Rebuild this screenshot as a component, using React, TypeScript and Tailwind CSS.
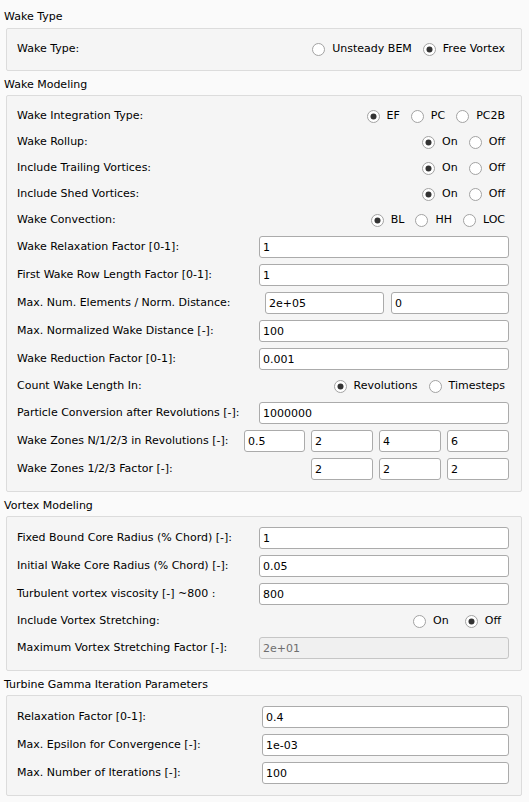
import React from "react"

const font = { fontFamily: '"DejaVu Sans", Verdana, sans-serif' }

function Radio({ label, checked }: { label: string; checked?: boolean }) {
  return (
    <div className="flex items-center">
      <svg width="13" height="13" viewBox="0 0 13 13" className="shrink-0">
        <circle cx="6.5" cy="6.5" r="6" fill="#ffffff" stroke="#a2a2a2" strokeWidth="1" />
        {checked && <circle cx="6.5" cy="6.5" r="3" fill="#333333" />}
      </svg>
      <span className="ml-[7px]">{label}</span>
    </div>
  )
}

function RadioRow({
  label,
  options,
  selected,
  gap = "gap-[11px]",
  pr = "pr-[4px]",
}: {
  label: string
  options: string[]
  selected: number
  gap?: string
  pr?: string
}) {
  return (
    <div className="flex h-[20px] items-center justify-between">
      <span>{label}</span>
      <div className={`flex items-center ${gap} ${pr}`}>
        {options.map((o, i) => (
          <Radio key={o} label={o} checked={i === selected} />
        ))}
      </div>
    </div>
  )
}

function Field({ value, width, disabled }: { value: string; width: string; disabled?: boolean }) {
  return (
    <input
      readOnly
      value={value}
      disabled={disabled}
      style={font}
      className={`h-[22px] ${width} rounded-[3px] border px-[3px] text-[11px] outline-none ${
        disabled
          ? "border-[#c6c6c6] bg-[#f0f0f0] text-[#6e6e6e]"
          : "border-[#ababab] bg-white text-black"
      }`}
    />
  )
}

function InputRow({
  label,
  value,
  width = "w-[250px]",
  disabled,
}: {
  label: string
  value: string
  width?: string
  disabled?: boolean
}) {
  return (
    <div className="flex h-[22px] items-center justify-between">
      <span>{label}</span>
      <Field value={value} width={width} disabled={disabled} />
    </div>
  )
}

function Section({
  title,
  first,
  children,
}: {
  title: string
  first?: boolean
  children: React.ReactNode
}) {
  return (
    <div>
      <div className={`pl-[4px] leading-[14px] ${first ? "h-[28px] pt-[10px]" : "h-[24px] pt-[7px]"}`}>
        {title}
      </div>
      <div className="ml-[6px] flex w-[516px] flex-col gap-[6px] rounded-[2px] border border-[#dcdcdc] bg-[#f5f5f5] pb-[11px] pl-[10px] pr-[12px] pt-[10px]">
        {children}
      </div>
    </div>
  )
}

export default function App() {
  return (
    <div style={font} className="h-[802px] w-[529px] bg-[#fafafa] text-[11px] text-black">
      <Section title="Wake Type" first>
        <RadioRow label="Wake Type:" options={["Unsteady BEM", "Free Vortex"]} selected={1} />
      </Section>

      <Section title="Wake Modeling">
        <RadioRow label="Wake Integration Type:" options={["EF", "PC", "PC2B"]} selected={0} />
        <RadioRow label="Wake Rollup:" options={["On", "Off"]} selected={0} />
        <RadioRow label="Include Trailing Vortices:" options={["On", "Off"]} selected={0} />
        <RadioRow label="Include Shed Vortices:" options={["On", "Off"]} selected={0} />
        <RadioRow label="Wake Convection:" options={["BL", "HH", "LOC"]} selected={0} />
        <InputRow label="Wake Relaxation Factor [0-1]:" value="1" />
        <InputRow label="First Wake Row Length Factor [0-1]:" value="1" />
        <div className="flex h-[22px] items-center justify-between">
          <span>Max. Num. Elements / Norm. Distance:</span>
          <div className="flex gap-[7px]">
            <Field value="2e+05" width="w-[119px]" />
            <Field value="0" width="w-[118px]" />
          </div>
        </div>
        <InputRow label="Max. Normalized Wake Distance [-]:" value="100" />
        <InputRow label="Wake Reduction Factor [0-1]:" value="0.001" />
        <RadioRow label="Count Wake Length In:" options={["Revolutions", "Timesteps"]} selected={0} />
        <InputRow label="Particle Conversion after Revolutions [-]:" value="1000000" />
        <div className="flex h-[22px] items-center justify-between">
          <span>Wake Zones N/1/2/3 in Revolutions [-]:</span>
          <div className="flex gap-[6px]">
            <Field value="0.5" width="w-[61px]" />
            <Field value="2" width="w-[62px]" />
            <Field value="4" width="w-[62px]" />
            <Field value="6" width="w-[62px]" />
          </div>
        </div>
        <div className="flex h-[22px] items-center justify-between">
          <span>Wake Zones 1/2/3 Factor [-]:</span>
          <div className="flex gap-[6px]">
            <Field value="2" width="w-[62px]" />
            <Field value="2" width="w-[62px]" />
            <Field value="2" width="w-[62px]" />
          </div>
        </div>
      </Section>

      <Section title="Vortex Modeling">
        <InputRow label="Fixed Bound Core Radius (% Chord) [-]:" value="1" />
        <InputRow label="Initial Wake Core Radius (% Chord) [-]:" value="0.05" />
        <InputRow label="Turbulent vortex viscosity [-] ~800 :" value="800" />
        <RadioRow
          label="Include Vortex Stretching:"
          options={["On", "Off"]}
          selected={1}
          gap="gap-[16px]"
          pr="pr-[8px]"
        />
        <InputRow label="Maximum Vortex Stretching Factor [-]:" value="2e+01" disabled />
      </Section>

      <Section title="Turbine Gamma Iteration Parameters">
        <InputRow label="Relaxation Factor [0-1]:" value="0.4" width="w-[247px]" />
        <InputRow label="Max. Epsilon for Convergence [-]:" value="1e-03" width="w-[247px]" />
        <InputRow label="Max. Number of Iterations [-]:" value="100" width="w-[247px]" />
      </Section>
    </div>
  )
}
